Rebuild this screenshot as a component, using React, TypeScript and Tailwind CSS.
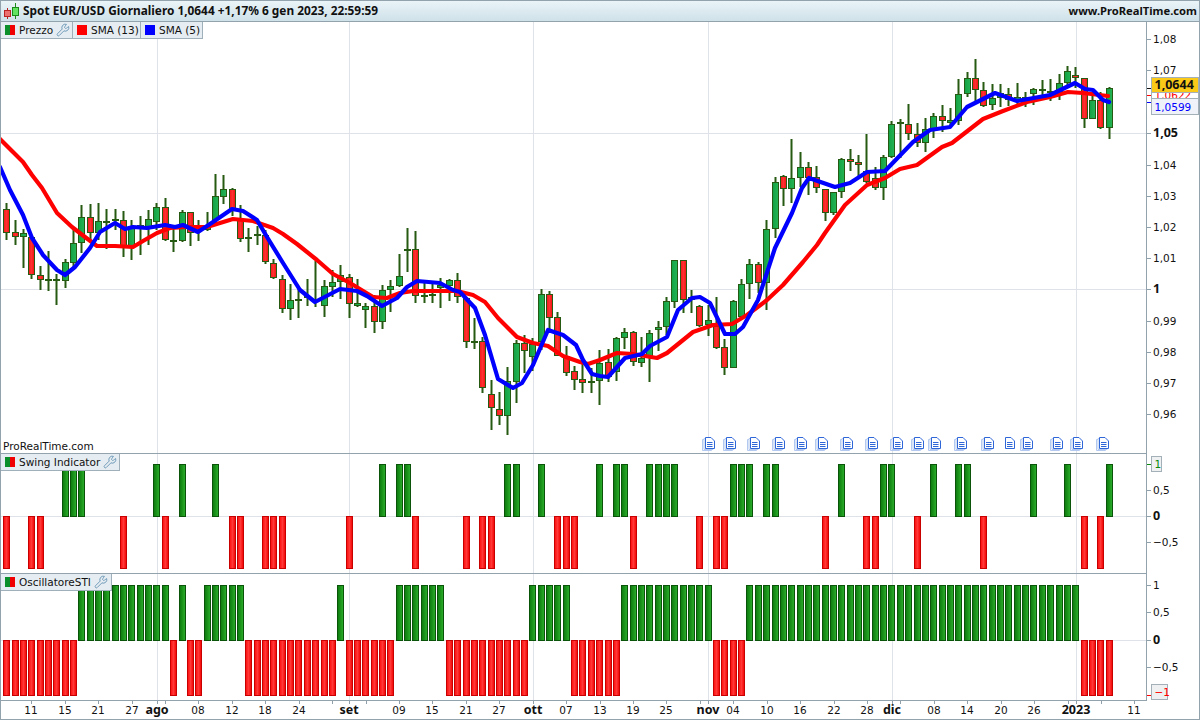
import { Wrench } from 'lucide-react';
import type { ReactNode } from 'react';

// ── Dati del grafico (coordinate in pixel della pagina) ─────────

// [wick top, wick bottom, body top, body bottom, 1 = up / 0 = down]
type Candle = [number, number, number, number, 0 | 1];

const CANDLES: Candle[] = [
  [203, 240, 209, 233, 0], [220, 245, 232, 237, 0], [229, 268, 233, 237, 1], [235, 279, 237, 275, 0],
  [266, 290, 275, 280, 0], [251, 291, 279, 281, 0], [274, 305, 279, 281, 0], [259, 288, 262, 281, 1],
  [227, 267, 243, 263, 1], [205, 253, 217, 243, 1], [204, 243, 217, 233, 0], [203, 240, 221, 233, 1],
  [209, 249, 221, 223, 0], [209, 230, 219, 221, 1], [211, 257, 220, 248, 0], [220, 260, 228, 247, 1],
  [216, 255, 225, 227, 0], [210, 245, 219, 227, 1], [203, 230, 207, 222, 1], [198, 241, 207, 240, 0],
  [225, 252, 240, 242, 1], [210, 242, 212, 241, 1], [212, 246, 212, 233, 0], [220, 241, 230, 232, 1],
  [212, 231, 225, 230, 1], [174, 225, 196, 220, 1], [175, 204, 189, 197, 1], [188, 216, 189, 209, 0],
  [205, 242, 220, 239, 0], [228, 252, 237, 239, 1], [226, 245, 234, 236, 1], [230, 264, 235, 262, 0],
  [259, 279, 263, 278, 0], [275, 313, 279, 309, 0], [284, 320, 300, 309, 1], [288, 318, 299, 301, 1],
  [279, 306, 296, 298, 1], [261, 307, 300, 302, 1], [280, 317, 286, 306, 1], [270, 297, 282, 287, 1],
  [265, 299, 275, 282, 1], [274, 318, 277, 304, 0], [279, 307, 303, 306, 1], [303, 328, 306, 310, 1],
  [295, 333, 306, 322, 0], [285, 329, 290, 322, 1], [280, 312, 286, 290, 1], [254, 287, 276, 286, 1],
  [228, 272, 249, 251, 1], [231, 303, 249, 296, 0], [283, 303, 295, 297, 1], [283, 303, 294, 295, 1],
  [278, 308, 285, 288, 1], [279, 301, 280, 286, 1], [273, 303, 280, 297, 0], [298, 348, 298, 342, 0],
  [318, 349, 341, 342, 1], [337, 393, 341, 388, 0], [380, 430, 394, 408, 0], [392, 425, 409, 416, 0],
  [367, 435, 381, 416, 1], [340, 403, 343, 382, 1], [335, 373, 343, 351, 0], [338, 371, 344, 357, 1],
  [289, 350, 294, 342, 1], [291, 332, 294, 318, 0], [312, 356, 317, 356, 0], [346, 376, 356, 373, 0],
  [366, 390, 371, 380, 0], [363, 393, 379, 383, 0], [368, 393, 381, 383, 1], [350, 405, 363, 381, 1],
  [349, 382, 362, 377, 0], [337, 381, 338, 372, 1], [328, 349, 332, 338, 1], [331, 366, 332, 362, 0],
  [337, 367, 358, 363, 1], [330, 382, 333, 357, 1], [321, 351, 327, 330, 1], [297, 335, 301, 327, 1],
  [260, 308, 260, 302, 1], [260, 313, 260, 300, 0], [290, 313, 297, 300, 1], [305, 327, 306, 326, 0],
  [305, 336, 320, 325, 1], [297, 349, 326, 348, 0], [339, 375, 347, 368, 0], [300, 368, 301, 368, 1],
  [279, 317, 284, 317, 1], [259, 299, 264, 284, 1], [262, 293, 264, 283, 0], [220, 310, 229, 283, 1],
  [177, 238, 182, 229, 1], [175, 206, 176, 189, 0], [139, 203, 178, 189, 1], [152, 187, 167, 178, 1],
  [162, 195, 167, 178, 0], [166, 193, 177, 188, 0], [189, 221, 189, 213, 0], [192, 215, 192, 213, 1],
  [158, 198, 159, 192, 1], [149, 171, 159, 162, 0], [155, 178, 162, 165, 0], [134, 183, 171, 182, 0],
  [167, 190, 178, 188, 0], [155, 200, 157, 188, 1], [121, 158, 124, 157, 1], [119, 158, 122, 124, 1],
  [104, 140, 124, 134, 0], [123, 147, 134, 143, 0], [118, 152, 129, 143, 1], [113, 138, 116, 129, 1],
  [105, 132, 116, 121, 0], [108, 128, 120, 123, 1], [79, 125, 94, 121, 1], [72, 97, 78, 94, 1],
  [59, 103, 78, 90, 0], [82, 107, 90, 106, 0], [84, 110, 98, 105, 1], [84, 107, 93, 98, 1],
  [88, 106, 94, 100, 0], [83, 105, 97, 100, 1], [92, 107, 97, 100, 1], [88, 105, 89, 94, 1],
  [80, 100, 89, 91, 1], [79, 101, 91, 93, 0], [74, 100, 83, 92, 1], [66, 87, 71, 83, 1],
  [67, 88, 75, 78, 0], [78, 128, 78, 119, 0], [92, 119, 100, 119, 1], [92, 129, 100, 128, 0],
  [87, 139, 88, 128, 1],
];

const SMA_13 = [
  [0, 139], [13, 152], [23, 162], [32, 175], [42, 188], [57, 213], [72, 227], [85, 237], [97, 246],
  [115, 246], [133, 247], [143, 241], [157, 233], [170, 228], [187, 227], [207, 227], [220, 223],
  [233, 219], [253, 221], [273, 228], [283, 234], [297, 244], [317, 260], [333, 274], [350, 283],
  [373, 297], [387, 298], [400, 293], [413, 291], [433, 291], [457, 291], [473, 295], [485, 302],
  [498, 318], [517, 337], [533, 343], [548, 346], [563, 356], [580, 362], [588, 364], [600, 360],
  [617, 353], [633, 354], [657, 358], [667, 353], [693, 332], [713, 325], [732, 324], [747, 315],
  [767, 300], [783, 285], [803, 262], [817, 245], [825, 233], [845, 205], [867, 185], [885, 178],
  [900, 169], [917, 165], [942, 147], [952, 143], [983, 119], [1003, 111], [1027, 102], [1050, 97],
  [1068, 92], [1083, 93], [1108, 96],
];

const SMA_5 = [
  [0, 167], [10, 190], [23, 215], [32, 238], [43, 255], [57, 270], [65, 275], [75, 267], [90, 248],
  [100, 232], [115, 223], [125, 229], [133, 227], [147, 228], [165, 225], [175, 227], [183, 225],
  [198, 232], [213, 222], [232, 209], [243, 211], [257, 220], [267, 237], [283, 263], [300, 290],
  [315, 302], [340, 289], [357, 291], [367, 296], [382, 306], [397, 298], [407, 287], [417, 281],
  [440, 283], [453, 290], [460, 292], [475, 308], [485, 335], [498, 379], [513, 388], [522, 383],
  [533, 365], [548, 330], [563, 335], [576, 345], [583, 360], [592, 374], [600, 376], [608, 377],
  [625, 358], [642, 354], [650, 346], [667, 337], [678, 310], [692, 298], [700, 297], [710, 303],
  [725, 334], [735, 334], [743, 327], [758, 300], [775, 248], [792, 213], [802, 188], [809, 178],
  [835, 187], [850, 183], [867, 172], [885, 171], [913, 142], [930, 130], [950, 127], [967, 107],
  [995, 93], [1017, 101], [1050, 95], [1075, 83], [1085, 89], [1093, 90], [1103, 100], [1109, 102],
];

const SWING_UP = [7, 8, 9, 18, 21, 25, 45, 47, 48, 60, 61, 64, 71, 73, 74, 77, 78, 79, 80, 87, 88, 89, 91, 92, 100, 105, 106, 111, 114, 115, 123, 127, 132];
const SWING_DOWN = [0, 3, 4, 14, 19, 27, 28, 31, 32, 33, 41, 49, 55, 57, 58, 66, 67, 68, 75, 83, 85, 86, 98, 103, 104, 109, 117, 129, 131];

// Oscillatore: tratti verdi, tutto il resto è rosso
const OSC_UP_RANGES = [[9, 19], [21, 21], [24, 28], [40, 40], [47, 52], [63, 67], [74, 84], [89, 128]];

const GRID_X = [157, 349, 533, 708, 892, 1076];

const DOCS = [
  { x: 709, stacked: true }, { x: 730, stacked: true }, { x: 754, stacked: true }, { x: 779, stacked: true },
  { x: 801, stacked: true }, { x: 822, stacked: true }, { x: 847, stacked: true }, { x: 872, stacked: true },
  { x: 897, stacked: true }, { x: 918, stacked: true }, { x: 935, stacked: true }, { x: 961, stacked: true },
  { x: 988, stacked: true }, { x: 1009, stacked: false }, { x: 1027, stacked: true }, { x: 1057, stacked: true },
  { x: 1077, stacked: true }, { x: 1103, stacked: true },
];

const TIME_LABELS: { x: number; label: string; bold?: boolean }[] = [
  { x: 31, label: '11' }, { x: 65, label: '15' }, { x: 98, label: '21' }, { x: 132, label: '27' },
  { x: 157, label: 'ago', bold: true }, { x: 198, label: '08' }, { x: 232, label: '12' }, { x: 265, label: '18' },
  { x: 299, label: '24' }, { x: 349, label: 'set', bold: true }, { x: 399, label: '09' }, { x: 432, label: '15' },
  { x: 466, label: '21' }, { x: 499, label: '27' }, { x: 533, label: 'ott', bold: true }, { x: 566, label: '07' },
  { x: 600, label: '13' }, { x: 633, label: '19' }, { x: 666, label: '25' }, { x: 708, label: 'nov', bold: true },
  { x: 733, label: '04' }, { x: 767, label: '10' }, { x: 800, label: '16' }, { x: 834, label: '22' },
  { x: 867, label: '28' }, { x: 892, label: 'dic', bold: true }, { x: 934, label: '08' }, { x: 967, label: '14' },
  { x: 1001, label: '20' }, { x: 1034, label: '26' }, { x: 1076, label: '2023', bold: true }, { x: 1134, label: '11' },
];

const EXTRA_TICKS = [165, 332, 366, 700, 900, 1068, 1101];

const barLeft = (i: number) => Math.floor(3.66 + i * 8.352);
const toPoints = (pts: number[][]) => pts.map(([x, y]) => `${x},${y}`).join(' ');

// ── Pezzi del grafico ───────────────────────────────────────

function GridLines({ y1, y2, rows }: { y1: number; y2: number; rows: number[] }) {
  return (
    <g stroke="#e0e2e9" strokeWidth={1}>
      {GRID_X.map((x) => (
        <line key={x} x1={x + 0.5} x2={x + 0.5} y1={y1} y2={y2} />
      ))}
      {rows.map((y) => (
        <line key={y} x1={0} x2={1146} y1={y + 0.5} y2={y + 0.5} />
      ))}
    </g>
  );
}

function CandleMark({ candle, index }: { candle: Candle; index: number }) {
  const [wickTop, wickBottom, bodyTop, bodyBottom, up] = candle;
  const left = barLeft(index);
  return (
    <g>
      <rect x={left + 2.5} y={wickTop} width={2} height={wickBottom - wickTop} fill="#265a12" />
      <rect
        x={left + 0.5}
        y={bodyTop + 0.5}
        width={6}
        height={Math.max(bodyBottom - bodyTop - 1, 1)}
        fill={up ? 'url(#candleUp)' : 'url(#candleDown)'}
        stroke="#265a12"
      />
    </g>
  );
}

function DocIcon({ x, stacked }: { x: number; stacked: boolean }) {
  const page = 'M0.5 0.5h5.5l3.5 3.5v7.5h-9z';
  return (
    <g transform={`translate(${x - 4} 437)`}>
      {stacked && <path d={page} transform="translate(-3 2)" fill="#fff" stroke="#b4c9ef" />}
      {stacked && <path d={page} transform="translate(-1.5 1)" fill="#fff" stroke="#b4c9ef" />}
      <path d={page} fill="#fff" stroke="#2f66d8" />
      <path d="M2 5.5h5.5M2 7.5h5.5M2 9.5h5.5" stroke="#2f66d8" strokeWidth={1} fill="none" />
    </g>
  );
}

function Bar({ index, top, bottom, up }: { index: number; top: number; bottom: number; up: boolean }) {
  return (
    <rect
      x={barLeft(index) + 0.5}
      y={top + 0.5}
      width={6}
      height={bottom - top}
      fill={up ? 'url(#barUp)' : 'url(#barDown)'}
      stroke={up ? '#0a540a' : '#c90000'}
    />
  );
}

function AxisLabel({ y, children, bold, color }: { y: number; children: string; bold?: boolean; color?: string }) {
  return (
    <g>
      <line x1={1147} x2={1151} y1={y + 0.5} y2={y + 0.5} stroke="#8fa0ab" />
      <text
        x={1153}
        y={y + 4}
        fontSize={bold ? 12.5 : 10.5}
        fontWeight={bold ? 700 : 400}
        fill={color ?? '#111'}
        className={bold ? "font-['Noto_Sans',sans-serif]" : undefined}
      >
        {children}
      </text>
    </g>
  );
}

function Flag({
  x,
  y,
  width,
  height,
  fill,
  color,
  tick,
  children,
  bold,
}: {
  x: number;
  y: number;
  width: number;
  height: number;
  fill: string;
  color: string;
  tick: number;
  children: string;
  bold?: boolean;
}) {
  return (
    <g>
      <line x1={1147} x2={1151} y1={tick + 0.5} y2={tick + 0.5} stroke={bold ? '#111' : color} />
      <rect x={x + 0.5} y={y + 0.5} width={width} height={height} fill={fill} stroke="#a3b0b8" />
      <text
        x={x + 3.5}
        y={y + height - 3.5}
        fontSize={bold ? 12.5 : 10.5}
        fontWeight={bold ? 700 : 400}
        fill={color}
        className={bold ? "font-['Noto_Sans',sans-serif]" : undefined}
      >
        {children}
      </text>
    </g>
  );
}

function Legend({ items }: { items: { label: string; swatch: 'split' | string; width: string; wrench?: boolean }[] }) {
  return (
    <div className="absolute left-0 top-0 flex">
      {items.map((item) => (
        <div
          key={item.label}
          className={`${item.width} flex h-[17px] items-center gap-[4px] border-r border-b border-[#9fb0ba] bg-[#e6edf2] pl-[4px]`}
        >
          {item.swatch === 'split' ? (
            <span className="flex h-[10px] w-[10px] shrink-0">
              <span className="w-1/2 bg-[#0b8f2a]" />
              <span className="w-1/2 bg-[#f00000]" />
            </span>
          ) : item.swatch === 'red' ? (
            <span className="h-[10px] w-[10px] shrink-0 bg-[#ff0000]" />
          ) : (
            <span className="h-[10px] w-[10px] shrink-0 bg-[#0000ff]" />
          )}
          <span className="whitespace-nowrap text-[10.5px] leading-none text-[#111]">{item.label}</span>
          {item.wrench && <Wrench size={14} strokeWidth={1.5} className="-ml-[1px] shrink-0 text-[#5f8fb0]" />}
        </div>
      ))}
    </div>
  );
}

/** Riga del grafico: area di disegno + scala dei prezzi a destra */
function Pane({
  top,
  height,
  overlay,
  plot,
  axis,
}: {
  top: number;
  height: number;
  overlay: ReactNode;
  plot: ReactNode;
  axis: ReactNode;
}) {
  return (
    <div className="flex">
      <div className="relative w-[1145px] border-b border-[#93a3ad]">
        <svg width={1145} height={height} viewBox={`1 ${top} 1145 ${height}`} className="block">
          {plot}
        </svg>
        {overlay}
      </div>
      <div className="w-[53px] border-l border-[#93a3ad]">
        <svg width={52} height={height + 1} viewBox={`1147 ${top} 52 ${height + 1}`} className="block overflow-hidden">
          {axis}
        </svg>
      </div>
    </div>
  );
}

// ── Pagina ──────────────────────────────────────────────────

export default function App() {
  return (
    <div className="flex h-[720px] w-[1200px] flex-col overflow-hidden border-x border-[#93a3ad] bg-white font-['DejaVu_Sans',sans-serif]">
      {/* barra del titolo */}
      <div className="flex h-[22px] items-center justify-between border-y border-[#93a3ad] bg-gradient-to-b from-[#eaf4f8] to-[#cfe1e9] pl-[2px] pr-[2px] font-['Noto_Sans',sans-serif] font-bold text-[#111]">
        <div className="flex items-center gap-[2px]">
          <svg width={18} height={18} viewBox="2 3 18 18" className="block">
            <path d="M14.5 4v16" stroke="#1a8a1a" strokeWidth={1} />
            <path d="M6.5 9v11" stroke="#b22" strokeWidth={1} />
            <rect x={3.5} y={11.5} width={6} height={6} fill="#ec7070" stroke="#b22" />
            <rect x={11.5} y={8.5} width={6} height={8} fill="#62e462" stroke="#1a8a1a" />
          </svg>
          <span className="whitespace-nowrap text-[11.85px]">Spot EUR/USD Giornaliero 1,0644 +1,17% 6 gen 2023, 22:59:59</span>
        </div>
        <span className="text-[11.2px]">www.ProRealTime.com</span>
      </div>

      {/* pannello prezzi */}
      <Pane
        top={22}
        height={431}
        overlay={
          <>
            <Legend
              items={[
                { label: 'Prezzo', swatch: 'split', width: 'w-[72px]', wrench: true },
                { label: 'SMA (13)', swatch: 'red', width: 'w-[68px]' },
                { label: 'SMA (5)', swatch: 'blue', width: 'w-[62px]' },
              ]}
            />
            <span className="absolute bottom-[0px] left-[2px] text-[10.5px] leading-[13px] text-[#111]">ProRealTime.com</span>
          </>
        }
        plot={
          <>
            <defs>
              <linearGradient id="candleUp">
                <stop offset="0" stopColor="#12a044" />
                <stop offset="1" stopColor="#26b555" />
              </linearGradient>
              <linearGradient id="candleDown">
                <stop offset="0" stopColor="#f01818" />
                <stop offset="0.5" stopColor="#ff3030" />
                <stop offset="1" stopColor="#f01010" />
              </linearGradient>
              <linearGradient id="barUp">
                <stop offset="0" stopColor="#0c780c" />
                <stop offset="1" stopColor="#2cb02c" />
              </linearGradient>
              <linearGradient id="barDown">
                <stop offset="0" stopColor="#ff0a0a" />
                <stop offset="0.5" stopColor="#ff3838" />
                <stop offset="1" stopColor="#f40000" />
              </linearGradient>
            </defs>
            <GridLines y1={22} y2={453} rows={[133, 289]} />
            {CANDLES.map((candle, i) => (
              <CandleMark key={i} candle={candle} index={i} />
            ))}
            <polyline points={toPoints(SMA_13)} fill="none" stroke="#ff0000" strokeWidth={4.2} strokeLinejoin="round" strokeLinecap="round" />
            <polyline points={toPoints(SMA_5)} fill="none" stroke="#0000ff" strokeWidth={4.2} strokeLinejoin="round" strokeLinecap="round" />
            {DOCS.map((doc) => (
              <DocIcon key={doc.x} x={doc.x} stacked={doc.stacked} />
            ))}
          </>
        }
        axis={
          <>
            <AxisLabel y={39}>1,08</AxisLabel>
            <AxisLabel y={70}>1,07</AxisLabel>
            <AxisLabel y={133} bold>1,05</AxisLabel>
            <AxisLabel y={165}>1,04</AxisLabel>
            <AxisLabel y={196}>1,03</AxisLabel>
            <AxisLabel y={227}>1,02</AxisLabel>
            <AxisLabel y={258}>1,01</AxisLabel>
            <AxisLabel y={289} bold>1</AxisLabel>
            <AxisLabel y={321}>0,99</AxisLabel>
            <AxisLabel y={352}>0,98</AxisLabel>
            <AxisLabel y={383}>0,97</AxisLabel>
            <AxisLabel y={414}>0,96</AxisLabel>
            <Flag x={1151} y={88} width={47} height={14} fill="#ffffff" color="#ff0000" tick={95}>1,0622</Flag>
            <Flag x={1151} y={98} width={47} height={16} fill="#eff2f8" color="#0000ff" tick={102}>1,0599</Flag>
            <Flag x={1151} y={77} width={47} height={15} fill="#fbc918" color="#111" tick={88} bold>1,0644</Flag>
          </>
        }
      />

      {/* Swing Indicator */}
      <Pane
        top={454}
        height={119}
        overlay={
          <Legend items={[{ label: 'Swing Indicator', swatch: 'split', width: 'w-[119px]', wrench: true }]} />
        }
        plot={
          <>
            <GridLines y1={454} y2={573} rows={[516]} />
            {SWING_UP.map((i) => (
              <Bar key={i} index={i} top={464} bottom={516} up />
            ))}
            {SWING_DOWN.map((i) => (
              <Bar key={i} index={i} top={516} bottom={568} up={false} />
            ))}
          </>
        }
        axis={
          <>
            <AxisLabel y={490}>0,5</AxisLabel>
            <AxisLabel y={516} bold>0</AxisLabel>
            <AxisLabel y={542}>−0,5</AxisLabel>
            <Flag x={1151} y={456} width={10} height={15} fill="#eef0f2" color="#0a8a0a" tick={464}>1</Flag>
          </>
        }
      />

      {/* OscillatoreSTI */}
      <Pane
        top={574}
        height={126}
        overlay={<Legend items={[{ label: 'OscillatoreSTI', swatch: 'split', width: 'w-[111px]', wrench: true }]} />}
        plot={
          <>
            <GridLines y1={574} y2={700} rows={[640]} />
            {CANDLES.map((_, i) => {
              const up = OSC_UP_RANGES.some(([from, to]) => i >= from && i <= to);
              return <Bar key={i} index={i} top={up ? 585 : 640} bottom={up ? 640 : 695} up={up} />;
            })}
          </>
        }
        axis={
          <>
            <AxisLabel y={585}>1</AxisLabel>
            <AxisLabel y={612}>0,5</AxisLabel>
            <AxisLabel y={640} bold>0</AxisLabel>
            <AxisLabel y={667}>−0,5</AxisLabel>
            <Flag x={1151} y={684} width={16} height={15} fill="#eef0f2" color="#ff0000" tick={695}>−1</Flag>
          </>
        }
      />

      {/* scala dei tempi */}
      <div className="h-[19px] border-b border-[#93a3ad]">
        <svg width={1198} height={18} viewBox="1 701 1198 18" className="block">
          {[...TIME_LABELS.map((t) => t.x), ...EXTRA_TICKS].map((x) => (
            <line key={x} x1={x + 0.5} x2={x + 0.5} y1={701} y2={704} stroke="#8fa0ab" />
          ))}
          {TIME_LABELS.map((t) => (
            <text
              key={t.x}
              x={t.x}
              y={714}
              textAnchor="middle"
              fontSize={t.bold ? 12.5 : 10.5}
              fontWeight={t.bold ? 700 : 400}
              fill="#111"
              className={t.bold ? "font-['Noto_Sans',sans-serif]" : undefined}
            >
              {t.label}
            </text>
          ))}
        </svg>
      </div>
    </div>
  );
}
